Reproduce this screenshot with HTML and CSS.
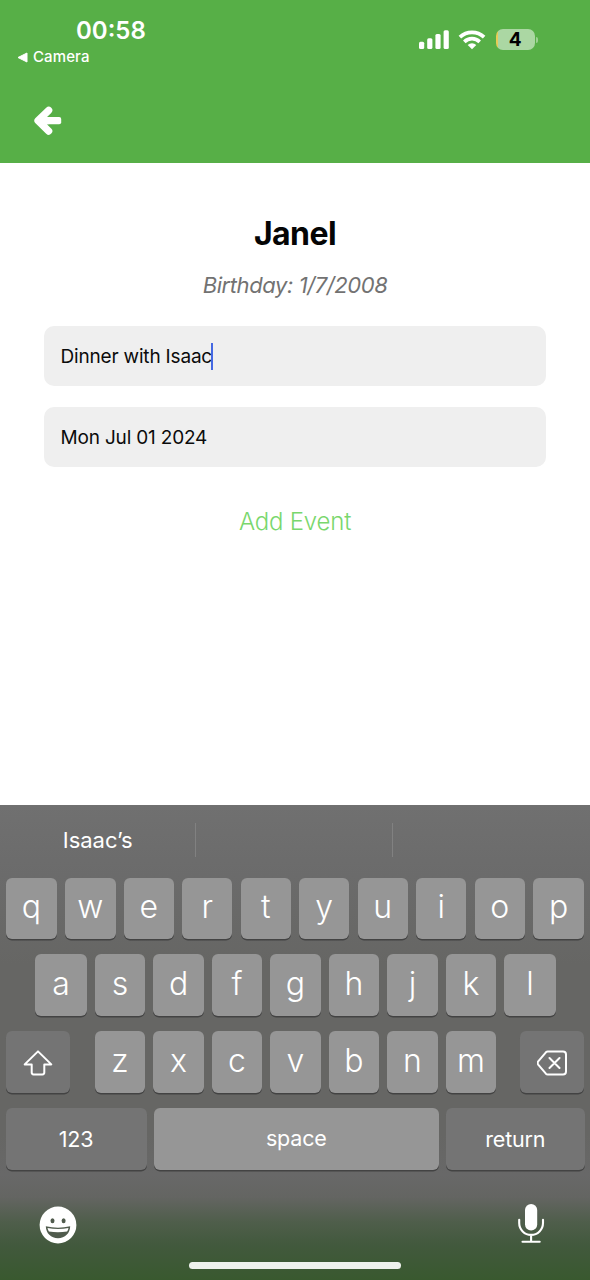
FILE: index.html
```html
<!DOCTYPE html>
<html lang="en">
<head>
<meta charset="utf-8">
<title>Add Event</title>
<link rel="stylesheet" href="styles.css">
</head>
<body>
<div class="screen">
  <header class="header">
    <div class="status">
      <div class="status-left">
        <div class="clock">00:58</div>
        <div class="back-app"><svg width="11" height="11" viewBox="0 0 11 11"><path d="M1 5.5 10 1v9z" fill="#fff" stroke="#fff" stroke-linejoin="round"/></svg><span>Camera</span></div>
      </div>
      <div class="status-right">
        <svg width="30" height="20" viewBox="0 0 30 20" fill="#fff"><rect x="0" y="11.7" width="5.2" height="7.3" rx="1.5"/><rect x="8.200" y="8.300" width="5.200" height="10.700" rx="1.500"/><rect x="16.400" y="4.100" width="5.200" height="14.900" rx="1.500"/><rect x="24.600" y="0.200" width="5.200" height="18.800" rx="1.500"/></svg>
        <svg class="wifi" width="28" height="20" viewBox="0 0 28 20" fill="none" stroke="#fff" stroke-width="3.700"><path d="M1.900 7.100a17.600 17.600 0 0 1 24.200 0"/><path d="M6.300 11.800a11.100 11.100 0 0 1 15.400 0"/><path d="M14 19.300 9.700 14.900a6.200 6.200 0 0 1 8.600 0z" fill="#fff" stroke="none"/></svg>
        <div class="battery"><div class="battery-body">4</div><div class="battery-tip"></div></div>
      </div>
    </div>
    <svg class="back" width="28" height="30" viewBox="0 0 28 30" fill="none" stroke="#fff" stroke-width="7.2" stroke-linecap="round" stroke-linejoin="round"><path d="M14.700 4.300 4 14.700 14.700 25.100M5.500 14.700H14"/><path d="M12 11.100h13.200q2 0 2 2v3.200q0 2-2 2H12z" fill="#fff" stroke="none"/></svg>
  </header>
  <main class="content">
    <h1 class="name">Janel</h1>
    <div class="birthday">Birthday: 1/7/2008</div>
    <div class="field"><span>Dinner with Isaac</span><i class="caret"></i></div>
    <div class="field"><span class="date">Mon Jul 01 2024</span></div>
    <div class="add">Add Event</div>
  </main>
  <section class="keyboard">
    <div class="suggestions"><div><span>Isaac’s</span></div><div></div><div></div></div>
    <div class="keys">
      <div class="row"><b class="key edge">q</b><b class="key">w</b><b class="key">e</b><b class="key">r</b><b class="key">t</b><b class="key">y</b><b class="key">u</b><b class="key">i</b><b class="key">o</b><b class="key edge">p</b></div>
      <div class="row inset"><b class="key edge">a</b><b class="key">s</b><b class="key">d</b><b class="key">f</b><b class="key">g</b><b class="key">h</b><b class="key">j</b><b class="key">k</b><b class="key edge">l</b></div>
      <div class="row spread">
        <b class="key dark side"><svg width="30" height="26" viewBox="0 0 30 26" fill="none" stroke="#fff" stroke-width="2" stroke-linejoin="round"><path d="M15 1.400 28.300 14.400H21.300V22.600Q21.300 24.400 19.500 24.400H10.500Q8.700 24.400 8.700 22.600V14.400H1.700z"/></svg></b>
        <div class="row inset"><b class="key">z</b><b class="key">x</b><b class="key">c</b><b class="key">v</b><b class="key">b</b><b class="key">n</b><b class="key">m</b></div>
        <b class="key dark side"><svg width="30" height="26" viewBox="0 0 30 26" fill="none" stroke="#fff" stroke-width="2" stroke-linecap="round" stroke-linejoin="round"><path d="M10.700 1.500H26q3 0 3 3v17q0 3-3 3H10.700q-1 0-1.800-.8L1.200 14.600q-1.200-1.600 0-3.200L8.900 2.300q.8-.8 1.800-.8zM12.500 8l10 10M22.500 8l-10 10"/></svg></b>
      </div>
      <div class="row spread words"><b class="key dark word num">123</b><b class="key word space">space</b><b class="key dark word return">return</b></div>
    </div>
    <div class="bottom">
      <svg class="emoji" width="38" height="38" viewBox="0 0 38 38"><circle cx="19" cy="19" r="18.400" fill="#fff"/><g fill="#505b4d"><ellipse cx="13.500" cy="14.700" rx="2" ry="2.500"/><ellipse cx="24.600" cy="14.700" rx="2" ry="2.500"/><path d="M6.800 20.300q12.200 2.700 24.400 0C31 27.400 26 32.200 19 32.200S7 27.400 6.800 20.300z"/></g><path d="M8.500 22q10.500 2 21 0-.4 2.100-1.400 3.400-9.100 1.600-18.200 0Q8.900 24 8.500 22z" fill="#fff"/></svg>
      <svg width="28" height="42" viewBox="0 0 28 42" fill="none" stroke="#fff" stroke-width="2.100" stroke-linecap="round"><rect x="8" y="1" width="12.200" height="26.500" rx="6.100" fill="#fff" stroke="none"/><path d="M2.200 16.700v3.300a11.900 11.900 0 0 0 23.800 0v-3.300M14.100 32.200v6.500M5.500 38.700h17.200"/></svg>
    </div>
    <div class="home"></div>
  </section>
</div>
</body>
</html>
```
FILE: styles.css
```css
* { box-sizing: border-box; }
body { margin: 0; background: #fff; font-family: Inter, "Liberation Sans", sans-serif; }
svg { display: block; flex: none; }
.screen { width: 590px; height: 1280px; display: flex; flex-direction: column; overflow: hidden; }
.header { flex: none; height: 163px; background: #57af47; color: #fff; }
.status { display: flex; justify-content: space-between; height: 106px; padding: 0 52px 0 17px; }
.status-left { padding-top: 16px; }
.clock { margin-left: 59px; font-size: 24px; line-height: 29px; font-weight: 600; }
.back-app { display: flex; align-items: center; gap: 5px; margin-top: 3px; font-size: 15px; line-height: 18px; font-weight: 500; letter-spacing: .1px; }
.status-right { display: flex; align-items: flex-start; padding-top: 30px; }
.wifi { margin-left: 9px; }
.battery { display: flex; align-items: center; gap: 1px; margin: -1px 0 0 10px; }
.battery-body { width: 39.5px; height: 21px; border-radius: 7px; background: linear-gradient(90deg, #e9cb58 2px, #abd7a3 2px); color: #000; font-size: 19px; line-height: 22px; font-weight: 700; text-align: center; }
.battery-tip { width: 2px; height: 6px; border-radius: 0 3px 3px 0; background: #9dd092; }
.back { margin-left: 33.5px; }
.content { flex: 1; display: flex; flex-direction: column; align-items: center; padding: 50.5px 44px 0; color: #0b0b0b; }
.name { margin: 0; font-size: 32px; line-height: 40px; font-weight: 700; letter-spacing: -.6px; color: #050505; }
.birthday { margin: 16px 0 26px; font-size: 22px; line-height: 30px; font-style: italic; color: #727272; letter-spacing: -.42px; }
.field { flex: none; width: 502px; height: 60.5px; display: flex; align-items: center; margin-bottom: 20.5px; padding: 1.5px 0 0 16.5px; border-radius: 10px; background: #efefef; font-size: 19px; letter-spacing: -.18px; }
.caret { width: 2.5px; height: 27px; margin-left: -1.2px; background: #4468e2; }
.add { margin-top: 18px; font-size: 24px; line-height: 32px; font-weight: 300; color: #79d76d; letter-spacing: -.2px; }
.keyboard { flex: none; height: 475.5px; background: linear-gradient(#707070 0, #6b6b6b 70px, #666664 160px, #666664 330px, #686868 370px, #646562 392px, #4f5e4b 417px, #42593d 440px, #39592f 475px); color: #fff; }
.suggestions { display: flex; height: 73px; padding-top: 18px; }
.suggestions div { width: 196.4px; height: 34px; border-right: 1px solid #818181; text-align: center; font-size: 22px; line-height: 34px; }
.suggestions div:last-child { border: 0; }
.keys { display: flex; flex-direction: column; gap: 15.2px; padding: 0 5.5px; }
.row { display: flex; justify-content: center; gap: 8.1px; }
.inset { padding-left: 1px; }
.spread { justify-content: space-between; }
.words { gap: 7px; }
.key { flex: none; width: 50.4px; height: 61.8px; display: flex; align-items: center; justify-content: center; padding-bottom: 3px; border-radius: 6px; background: #969696; box-shadow: 0 1.5px 0 #434343; font-size: 32px; font-weight: 350; line-height: 40px; }
.edge { width: 51.4px; }
.dark { background: #747474; padding-bottom: 0; }
.side { width: 64.5px; padding-top: 1.5px; }
.word { font-size: 21.5px; font-weight: 400; letter-spacing: -.2px; }
.num { width: 141px; }
.space { width: 285.5px; }
.return { width: 138.5px; }
.bottom { display: flex; justify-content: space-between; padding: 33px 45px 0 39px; height: 92px; }
.emoji { margin-top: 2.5px; }
.home { width: 212px; height: 7px; margin: 0 auto; border-radius: 4px; background: #eef1ed; }
```
